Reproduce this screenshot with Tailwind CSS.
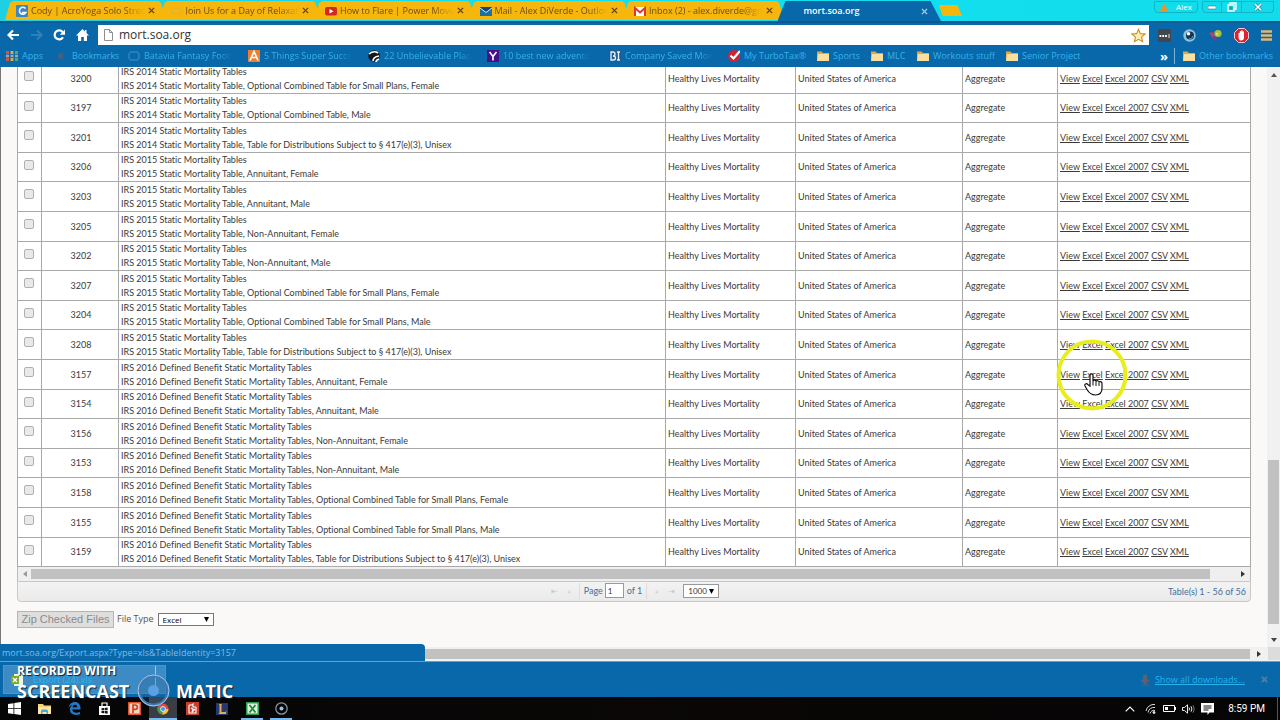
<!DOCTYPE html>
<html lang="en">
<head>
<meta charset="utf-8">
<title>mort.soa.org</title>
<script src="https://cdn.jsdelivr.net/npm/@tailwindcss/browser@4"></script>
</head>
<body class="relative flex h-screen flex-col overflow-hidden bg-[#fbf9f8] font-['Open_Sans',sans-serif]">

<header class="shrink-0 bg-[#0868aa]">
  <div class="flex h-[21px] items-start bg-linear-to-r from-[#1fd0e4] via-[#10e0f0] to-[#12dcec] pt-px pl-[5px]">
    <div id="tabs" class="grid w-[927px] grid-cols-6" role="tablist"></div>
    <button aria-label="New tab" class="mt-1 ml-[7px] h-[11px] w-[23px] bg-[#f6b60c] [clip-path:polygon(0_0,80%_0,100%_100%,16%_100%)]"></button>
    <div class="mr-[6px] ml-auto flex h-3 items-center text-[8px] leading-none text-white">
      <button class="flex h-3 w-11 items-center justify-center gap-2 rounded-b border border-[#12b4c6]"><svg class="size-2" viewBox="0 0 8 8"><path d="M4 0 8 8H0z" fill="#e5952a"/></svg>Alex</button>
      <button aria-label="Minimize" class="ml-1 flex h-3 w-5 items-center justify-center rounded-bl border border-[#12b4c6]"><svg class="size-2" viewBox="0 0 8 8"><rect y="3" width="8" height="3" fill="#fff" stroke="#2a7f92" stroke-width=".6"/></svg></button>
      <button aria-label="Restore" class="flex h-3 w-5 items-center justify-center border border-l-0 border-[#12b4c6]"><svg class="size-[10px]" viewBox="0 0 10 10" fill="none" stroke="#fff" stroke-width="1.4"><path d="M3 2.500V1h6v6H7.500"/><rect x="1" y="3" width="6" height="6"/><rect x="3" y="5" width="2" height="2" stroke="#2a7f92" stroke-width=".8"/></svg></button>
      <button aria-label="Close" class="flex h-3 w-8 items-center justify-center rounded-br border border-l-0 border-[#12b4c6]"><svg class="size-2" viewBox="0 0 8 8"><path d="M1 1l6 6M7 1 1 7" stroke="#2a7f92" stroke-width="2.800"/><path d="M1 1l6 6M7 1 1 7" stroke="#fff" stroke-width="1.600"/></svg></button>
    </div>
  </div>
  <div class="flex h-[26px] items-center border-t-2 border-[#075a94] pl-[7px]">
    <button aria-label="Back"><svg class="h-3 w-[13px]" viewBox="0 0 13 12" fill="none" stroke="#fff" stroke-width="2.200"><path d="M12 6H1.500M6 1.500 1.500 6 6 10.500"/></svg></button>
    <button aria-label="Forward" class="ml-[10px]"><svg class="h-3 w-[13px]" viewBox="0 0 13 12" fill="none" stroke="#2f80b9" stroke-width="2.200"><path d="M1 6h10.500M7 1.500 11.500 6 7 10.500"/></svg></button>
    <button aria-label="Reload" class="ml-[10px]"><svg class="h-3 w-[13px]" viewBox="0 0 13 12"><path d="M10 8.200A4.500 4.500 0 1 1 9.600 3" fill="none" stroke="#fff" stroke-width="2.200"/><path d="M12 .5v5.200H6.800z" fill="#fff"/></svg></button>
    <button aria-label="Home" class="ml-[10px]"><svg class="h-3 w-[13px]" viewBox="0 0 13 12"><path d="M6.500 0 0 6.500h2V12h3.200V8h2.600v4H11V6.500h2L10.500 4V1H9v1.500z" fill="#fff"/></svg></button>
    <div class="ml-[9px] flex h-5 flex-1 items-center bg-white pr-[3px] pl-[6px]">
      <svg class="h-3 w-[9px]" viewBox="0 0 9 12" fill="#fff" stroke="#8e8e8e"><path d="M.5.5h5l3 3v8h-8zM5.500.5v3h3"/></svg>
      <input aria-label="Address" value="mort.soa.org" class="ml-[6px] min-w-0 flex-1 text-[12px] leading-5 text-[#333] outline-none">
      <button aria-label="Bookmark this page"><svg class="size-[15px]" viewBox="0 0 24 24"><path d="m12 2 3 7 7.500.6-5.700 5 1.800 7.400-6.600-4-6.600 4 1.800-7.400-5.700-5L9 9z" fill="#fdf0b0" stroke="#c98f2a" stroke-width="1.700"/></svg></button>
    </div>
    <div class="flex items-center pr-2 pl-[9px]">
      <svg class="h-[13px] w-[13px]" viewBox="0 0 13 13"><rect width="13" height="13" rx="1" fill="#44464d"/><path d="M1.500 7h7.500" stroke="#fff" stroke-width="2" stroke-dasharray="1.800 1"/><path d="M11 5v4" stroke="#ddd"/></svg>
      <svg class="ml-[12px] size-[13px]" viewBox="0 0 13 13"><circle cx="6.500" cy="6.500" r="6.200" fill="#8fc3d8"/><circle cx="7" cy="6.500" r="4" fill="#16324f"/><circle cx="5.500" cy="4.800" r="1.800" fill="#fff"/><path d="M6 10a4 4 0 0 0 4-3" stroke="#48a8d8" fill="none"/></svg>
      <svg class="ml-[13px] size-[13px]" viewBox="0 0 13 13"><circle cx="9" cy="4.500" r="3.600" fill="#a7c43a"/><path d="M0 4l4-1 2 4-2 2z" fill="#b3446e"/><path d="M4 7l4 1-1 4-3-1z" fill="#7d3b8c"/><circle cx="8" cy="5" r="1.500" fill="#e9d65c"/></svg>
      <svg class="ml-[12px] size-[15px]" viewBox="0 0 15 15"><path d="M4.500.5h6l4 4v6l-4 4h-6l-4-4v-6z" fill="#dd2333" stroke="#f2c9cc"/><path d="M4.500 8V5.200a.7.700 0 0 1 1.300 0V3.800a.7.700 0 0 1 1.400 0V3a.7.700 0 0 1 1.400 0v1a.7.700 0 0 1 1.400 0v5.500a3 3 0 0 1-3 3c-2 0-2.500-2-2.500-4.500z" fill="#fff"/></svg>
      <button aria-label="Menu" class="ml-[12px] block"><svg class="h-[11px] w-[11px]" viewBox="0 0 11 11"><path d="M0 1.500h11M0 5.500h11M0 9.500h11" stroke="#e0b673" stroke-width="2.300"/></svg></button>
    </div>
  </div>
  <nav aria-label="Bookmarks" class="flex h-5 items-center pr-[7px] pb-[2px] pl-[6px] text-[9px] leading-[18px] text-[#35b2ea]" id="marks"></nav>
</header>

<div class="flex min-h-0 flex-1">
  <main class="flex min-w-0 flex-1 flex-col justify-end overflow-hidden border-l border-[#777] px-4">
    <table class="w-full shrink-0 table-fixed border-collapse bg-white font-[Lato,'Liberation_Sans',sans-serif] text-[9px] leading-[14px] text-[#3a3a3a] [font-variant-ligatures:none]">
      <colgroup><col class="w-6"><col class="w-[77px]"><col><col class="w-[130px]"><col class="w-[167px]"><col class="w-[95px]"><col class="w-[193px]"></colgroup>
      <tbody id="rows"></tbody>
    </table>
    <div class="flex h-[14px] shrink-0 items-center border-x border-[#bbb] bg-[#efefef]">
      <svg class="ml-1 size-[6px]" viewBox="0 0 6 6"><path d="M5 0v6L1 3z" fill="#999"/></svg>
      <div class="ml-[3px] h-[10px] flex-1 bg-[#c1c1c1]"></div>
      <svg class="mr-1 ml-[30px] size-[6px]" viewBox="0 0 6 6"><path d="M1 0v6l4-3z" fill="#333"/></svg>
    </div>
    <div class="grid h-[21px] shrink-0 grid-cols-[1fr_auto_1fr] items-center rounded-b border border-[#c8c8c8] bg-linear-to-b from-[#f3f3f3] to-[#eaeaea] font-[Lato,sans-serif] text-[10px] leading-4 text-[#42709b]">
      <span></span>
      <div class="flex items-center pb-[2px]">
        <button aria-label="First page" class="w-[11px] text-[8px] text-[#c6c6c6]">⇤</button>
        <button aria-label="Previous page" class="ml-1 w-[11px] text-[8px] text-[#c6c6c6]">«</button>
        <label for="pg" class="ml-1 border-l border-[#ddd] pl-1 text-[9px]">Page</label>
        <input id="pg" value="1" class="ml-[2px] h-[15px] w-[19px] border border-[#8a9db5] bg-white pl-[2px] text-[8px] text-[#333]">
        <span class="ml-[3px] border-r border-[#ddd] pr-1 text-[9px]">of 1</span>
        <button aria-label="Next page" class="ml-1 w-[11px] text-[8px] text-[#c6c6c6]">»</button>
        <button aria-label="Last page" class="ml-1 w-[11px] text-[8px] text-[#c6c6c6]">⇥</button>
        <span class="relative ml-[6px] flex"><select aria-label="Rows per page" class="h-[14px] w-9 appearance-none border border-[#999] bg-white pl-1 text-[8px] leading-3 text-[#333]"><option>1000</option></select><svg class="pointer-events-none absolute top-[5px] right-[5px] size-[5px]" viewBox="0 0 6 6"><path d="M0 0h6L3 6z" fill="#000"/></svg></span>
      </div>
      <span class="pr-1 text-right text-[9px]">Table(s) 1 - 56 of 56</span>
    </div>
    <div class="mt-2 mb-[19px] flex h-[18px] shrink-0 items-center font-['Liberation_Sans',sans-serif] text-[11px] text-[#555]">
      <button disabled class="h-[17px] w-[97px] border border-[#b5b5b5] bg-[#dedede] leading-[15px] text-[#8b8b8b]">Zip Checked Files</button>
      <label for="ft" class="ml-[3px] font-['Open_Sans',sans-serif] text-[9px]">File Type</label>
      <span class="relative ml-1 flex"><select id="ft" class="h-[13px] w-14 appearance-none border border-[#777] bg-white pl-1 font-['Open_Sans',sans-serif] text-[8px] leading-[11px] text-black"><option>Excel</option></select><svg class="pointer-events-none absolute top-1 right-[5px] size-[5px]" viewBox="0 0 6 6"><path d="M0 0h6L3 6z" fill="#000"/></svg></span>
    </div>
  </main>
  <div class="flex w-[13px] shrink-0 flex-col items-center bg-[#f1f1f1] pt-[5px] pb-1">
    <svg class="size-[6px]" viewBox="0 0 6 6"><path d="M0 5h6L3 1z" fill="#555"/></svg>
    <div class="mt-auto mb-[13px] h-[164px] w-[11px] bg-[#c1c1c1]"></div>
    <svg class="size-[6px]" viewBox="0 0 6 6"><path d="M0 1h6L3 5z" fill="#444"/></svg>
  </div>
</div>
<div class="relative flex h-[14px] shrink-0 items-center bg-[#f1f1f1] pb-px">
  <div class="h-[10px] flex-1 bg-[#c1c1c1]"></div>
  <svg class="mx-[6px] size-[6px]" viewBox="0 0 6 6"><path d="M1 0v6l4-3z" fill="#333"/></svg>
  <span class="h-full w-[12px] bg-[#dcdcdc]"></span>
  <div class="absolute bottom-0 left-0 h-[17px] w-[425px] rounded-tr bg-[#0868aa] pl-[2px] text-[9px] leading-[18px] text-[#7ebce6]">mort.soa.org/Export.aspx?Type=xls&amp;TableIdentity=3157</div>
</div>

<section aria-label="Downloads" class="flex h-9 shrink-0 items-center border-t border-[#5ba3d2] bg-[#0868aa] text-[9px]">
  <button class="ml-[3px] flex h-[29px] w-[163px] items-center border border-[#4c96cb] bg-[#3c8bc4] text-[#22b8f2]">
    <svg class="ml-[7px] size-3" viewBox="0 0 12 12"><path d="M3 0h7l2 2v10H3z" fill="#eef3ea"/><rect y="2" width="8" height="8" fill="#7da82b"/><path d="m2 4 4 4M6 4 2 8" stroke="#fff" stroke-width="1.300"/></svg>
    <span class="ml-[10px]">Export (24).xls</span>
    <span class="mr-[9px] ml-auto h-full border-l border-[#9dc8e6]"></span>
  </button>
  <svg class="ml-auto h-3 w-2" viewBox="0 0 8 12"><path d="M2.500 1h3v5H8L4 10 0 6h2.500zM0 11h8" fill="#5b6271" stroke="#5b6271"/></svg>
  <a href="#" class="ml-[6px] text-[#27b4ee] underline">Show all downloads...</a>
  <button aria-label="Close downloads bar" class="mr-3 ml-4"><svg class="size-[7px]" viewBox="0 0 8 8"><path d="M1 1l6 6M7 1 1 7" stroke="#4c82a8" stroke-width="2"/></svg></button>
</section>

<footer class="flex h-[23px] shrink-0 items-center bg-linear-to-r from-[#060606] via-[#0a0706] to-[#060505] text-[10px] text-white">
  <button aria-label="Start" class="flex h-full w-[29px] items-center justify-center"><svg class="size-[13px]" viewBox="0 0 13 13"><path d="M0 2l5.500-.8v5H0zM6.300 1 13 0v6.200H6.300zM0 7h5.500v5L0 11.200zM6.300 7H13v6l-6.700-1z" fill="#fff"/></svg></button>
  <button aria-label="File Explorer" class="flex h-full w-[30px] items-center justify-center"><svg class="h-3 w-[13px]" viewBox="0 0 13 12"><path d="M0 1h5l1 1.500h7V11H0z" fill="#f2d27a"/><path d="M0 4h13v7H0z" fill="#fbe7a2"/><path d="M3 11V8q0-1.500 1.500-1.500h4Q10 6.500 10 8v3H8.500V9h-4v2z" fill="#4aa8dc"/></svg></button>
  <button aria-label="Edge" class="flex h-full w-[30px] items-center justify-center"><svg class="size-[13px]" viewBox="0 0 24 24"><path d="M1 11C2 4 7 0 12.500 0 19 0 23 5 23 11v3H8c0 4 4 6 7.500 6 2.500 0 4.500-.7 6.500-2v4.500c-2 1-4.500 1.500-7 1.500C8 24 3.500 20 3.500 14c0-4 2-7 5-8.500C5 6 2.500 8 1 11zm7.500-1.500H17C17 7 15.500 5 13 5S8.800 7 8.500 9.500z" fill="#2277c9"/></svg></button>
  <button aria-label="Store" class="flex h-full w-[30px] items-center justify-center"><svg class="size-[13px]" viewBox="0 0 13 13"><path d="M1 4h11v9H1z" fill="#fff"/><path d="M4 4V1h5v3" fill="none" stroke="#fff" stroke-width="1.200"/><path d="M3.500 6.300 6 6v2.300H3.500zM6.600 5.900 9.600 5.500v2.800h-3zM3.500 8.900H6v2.300l-2.500-.3zM6.600 8.900h3v2.800l-3-.4z" fill="#111"/></svg></button>
  <button aria-label="PowerPoint" class="flex h-full w-[30px] items-center justify-center"><svg class="size-[13px]" viewBox="0 0 13 13"><rect width="13" height="13" fill="#d9532c"/><rect x="1.500" y="1.500" width="10" height="10" fill="#f4d6c8"/><path d="M5 11V3h2.200a2.200 2.200 0 0 1 0 4.400H5" fill="none" stroke="#d0421b" stroke-width="1.700"/></svg></button>
  <button aria-label="Chrome" class="flex h-full w-7 items-center justify-center border-b-2 border-[#76b9ed] bg-[#3a3e44] pt-[2px]"><svg class="size-3" viewBox="0 0 24 24"><circle cx="12" cy="12" r="11" fill="#e2453a"/><path d="M12 12 2 7a11 11 0 0 0 9 16z" fill="#3ba153"/><path d="M12 12h11a11 11 0 0 1-12 11z" fill="#f4c52e"/><circle cx="12" cy="12" r="5" fill="#4a8ff0" stroke="#fff" stroke-width="1.500"/></svg></button>
  <button aria-label="Reader" class="flex h-full w-[30px] items-center justify-center"><svg class="size-[13px]" viewBox="0 0 13 13"><rect width="13" height="13" fill="#c5402c"/><path d="M3 3h3l1-1v3h3M3 3v8h7V5M5 6l2 1-1 3 3-3" fill="none" stroke="#fff" stroke-width="1.100"/></svg></button>
  <button aria-label="League" class="flex h-full w-[30px] items-center justify-center"><svg class="size-3" viewBox="0 0 12 12"><rect width="12" height="12" fill="#26386f"/><path d="M2.500 1h3.500L5.500 2v7h4l1-1.500L10 11H2.500l1-1.500V2z" fill="#dcae4e"/></svg></button>
  <button aria-label="Excel" class="mx-1 flex h-full w-[22px] items-center justify-center border-b-2 border-[#76b9ed] pt-[2px]"><svg class="size-[13px]" viewBox="0 0 13 13"><rect width="13" height="13" fill="#2c9a4b"/><rect x="1.500" y="1.500" width="10" height="10" fill="#dff0df"/><path d="m3.500 3 6 7.500M9.500 3l-6 7.500" stroke="#1f8a3c" stroke-width="1.800"/></svg></button>
  <button aria-label="Screencast recorder" class="ml-[3px] flex h-full w-[22px] items-center justify-center border-b-2 border-[#76b9ed] pt-[2px]"><svg class="size-[13px]" viewBox="0 0 13 13"><circle cx="6.500" cy="6.500" r="5.700" fill="none" stroke="#8d9aa6" stroke-width="1.200"/><circle cx="6.500" cy="6.500" r="2" fill="#8fc4ee"/></svg></button>
  <div class="mr-[2px] ml-auto flex h-full items-center border-r border-[#555] pr-3">
    <svg class="h-[6px] w-[10px]" viewBox="0 0 10 6"><path d="m.7 5.300 4.300-4.300 4.300 4.300" fill="none" stroke="#fff" stroke-width="1.200"/></svg>
    <svg class="ml-[10px] h-[11px] w-[11px]" viewBox="0 0 11 11" fill="none" stroke="#ddd"><path d="M1 8a8 8 0 0 1 9-6.500M3 9.500a6 6 0 0 1 7-5M5 10.500a4 4 0 0 1 5-3"/><circle cx="9" cy="9.500" r="1" fill="#fff"/></svg>
    <svg class="ml-[7px] h-[7px] w-[13px]" viewBox="0 0 13 7"><path d="M.5.500h11v6H.5zM12.500 2v3" fill="none" stroke="#fff"/><path d="M2 2h3v3H2z" fill="#fff"/></svg>
    <svg class="ml-[6px] h-[10px] w-[13px]" viewBox="0 0 13 10" fill="none" stroke="#eee"><path d="M.5 3.500H2.500L5.500.8v8.400L2.500 6.500h-2z"/><path d="M7 3.500q1 1.500 0 3M9 2.300q1.800 2.700 0 5.400"/><path d="M11 1.300q2.500 3.700 0 7.400" stroke="#777"/></svg>
    <svg class="ml-[6px] h-3 w-[13px]" viewBox="0 0 13 12"><path d="M0 0h13v9.500H8.500L6.500 12v-2.500H0z" fill="#fff"/><path d="M2.500 3h8M2.500 5h8M2.500 7h5" stroke="#111"/></svg>
    <span class="ml-[14px] font-[Roboto,sans-serif]">8:59 PM</span>
  </div>
</footer>

<!-- Recorder watermark -->
<div class="pointer-events-none absolute bottom-[13px] left-[17px] font-['Open_Sans',sans-serif] leading-none font-bold text-white [text-shadow:1px_1px_1px_#123]">
  <div class="-mb-[3px] text-[12px]">RECORDED WITH</div>
  <div class="flex items-center text-[18px]"><span class="w-[120px]">SCREENCAST</span>
    <svg class="size-[33px]" viewBox="0 0 33 33"><circle cx="16.500" cy="16.500" r="14.500" fill="#2d5f90" fill-opacity=".3" stroke="#3d79b6" stroke-width="3"/><circle cx="16.500" cy="16.500" r="15.500" fill="none" stroke="#a9c9ea"/><circle cx="16.500" cy="16.500" r="5.500" fill="#58a1e4"/></svg>
    <span class="ml-[6px]">MATIC</span></div>
</div>

<!-- Pointer with click highlight -->
<svg class="pointer-events-none absolute top-[338px] left-[1055px] size-[74px]" viewBox="0 0 74 74">
  <circle cx="37" cy="37" r="33.500" fill="none" stroke="#e8ee1c" stroke-width="4"/>
  <path d="M35 48V37.500c0-2.200 3-2.200 3 0V43c.5-1.500 3-1.200 3 .5.500-1.300 3-1 3 .7.500-1 3-.8 3 1.300V50c0 4-2 7-6.500 7S34 55 32 51.500l-2-3.500c-1-2 1.500-3 2.800-1.500z" fill="#fff" stroke="#111" stroke-width="1.200"/>
  <path d="M38 43v4.500M41 43.500V48M44 44.500V48" stroke="#111" stroke-width="1"/>
</svg>

<script>
const tabs = [
  ['Cody | AcroYoga Solo Stretch', '<rect width="12" height="12" rx="1" fill="#3d86c6"/><path d="M9.500 3.500a3.500 3.500 0 1 0 .5 4H6" fill="none" stroke="#fff" stroke-width="1.500"/>'],
  ['Join Us for a Day of Relaxation', '<ellipse cx="6" cy="6" rx="5" ry="3" fill="none" stroke="#e9b02a" stroke-width="1.500"/>'],
  ['How to Flare | Power Moves', '<rect y="2" width="12" height="8.500" rx="2" fill="#d3281e"/><path d="M4.500 4v4.500L8.500 6.200z" fill="#fff"/>'],
  ['Mail - Alex DiVerde - Outlook', '<path d="M0 2h12v9H0z" fill="#1a6fa5"/><path d="M0 2l6 5 6-5z" fill="#0d4a78"/><path d="M0 3l6 4.500L12 3" fill="none" stroke="#cfe6f0"/>'],
  ['Inbox (2) - alex.diverde@gmail', '<path d="M0 2h12v9H0z" fill="#fff"/><path d="M1 11V3l5 4.500L11 3v8" fill="none" stroke="#d93a2e" stroke-width="2"/>'],
];
const closeIcon = c => `<svg class="size-[7px]" viewBox="0 0 8 8"><path d="M1 1l6 6M7 1 1 7" stroke="${c}" stroke-width="1.500"/></svg>`;
document.getElementById('tabs').innerHTML = tabs.map(([t, i]) => `
  <div role="tab" class="-mr-[7px] flex h-[19px] items-center bg-[#f6b60c] pr-[12px] pl-[11px] text-[9px] [clip-path:polygon(5px_10%,8px_0,154px_0,156px_10%,100%_100%,0_100%)]">
    <svg class="size-3 shrink-0" viewBox="0 0 12 12">${i}</svg>
    <span class="ml-[3px] w-[113px] overflow-hidden whitespace-nowrap text-[#6d4d0c] [mask-image:linear-gradient(to_right,#000_82%,transparent)]">${t}</span>
    <button aria-label="Close tab" class="ml-auto">${closeIcon('#5f430d')}</button>
  </div>`).join('') + `
  <div role="tab" aria-selected="true" class="relative -mr-[9px] flex h-5 items-center bg-[#0868aa] pr-[13px] pl-[26px] text-[9px] font-semibold text-white [clip-path:polygon(8px_0,153px_0,100%_100%,0_100%)]">
    <span>mort.soa.org</span>
    <button aria-label="Close tab" class="ml-auto">${closeIcon('#a8d0ec')}</button>
  </div>`;

const folder = '<path d="M0 1.500h4.500L6 3h6v8H0z" fill="#d9a84f"/><path d="M1 4h11v7H0z" fill="#fbdf9d"/>';
const marks = [
  ['Apps', 'w-[50px]', '<g fill="#d2573d"><path d="M0 1h3v3H0zM0 8h3v3H0z"/></g><g fill="#c3b24d"><path d="M4.500 1h3v3h-3zM4.500 8h3v3h-3z"/></g><g fill="#55a66f"><path d="M9 1h3v3H9zM9 8h3v3H9z"/></g><path d="M0 4.700h3v2.600H0zM4.500 4.700h3v2.600h-3zM9 4.700h3v2.600H9z" fill="#a9a1b0"/>'],
  ['Bookmarks', 'w-[72px]', '<circle cx="4.500" cy="6" r="3" fill="#44607f"/>'],
  ['Batavia Fantasy Football', 'w-[120px]', '<rect x="1" y="2" width="10" height="8" rx="3" fill="none" stroke="#2f83ba" stroke-width="1.500"/>'],
  ['5 Things Super Successful', 'w-[120px]', '<rect width="12" height="12" fill="#ef7f2f"/><path d="M2 10.500 6 1.500l4 9M3.800 7.500h4.400" fill="none" stroke="#fff" stroke-width="1.700"/>'],
  ['22 Unbelievable Places', 'w-[119px]', '<circle cx="6" cy="6" r="5.800" fill="#15181c"/><path d="M1 4q5-4 9-1M5 11q0-4 6-5M8 12q0-2 3-3" fill="none" stroke="#fff" stroke-width="1.600"/>'],
  ['10 best new adventures', 'w-[122px]', '<rect width="12" height="12" fill="#45108a"/><path d="m2.500 2 3.500 4.500L9.500 2M6 6v4.500" fill="none" stroke="#fff" stroke-width="1.600"/>'],
  ['Company Saved Money', 'w-[119px]', '<rect width="12" height="12" fill="#1d5f92"/><path d="M2 2v8h2.500q2 0 2-2T4 6q2 0 2-2T4 2zM9.500 2v8M8 2h3M8 10h3" fill="none" stroke="#e8eef4" stroke-width="1.300"/>'],
  ['My TurboTax®', 'w-[89px]', '<circle cx="6" cy="6" r="6" fill="#cf2535"/><path d="m2.500 5.500 3 3L12 1" fill="none" stroke="#fff" stroke-width="2.200"/>'],
  ['Sports', 'w-[54px]', folder], ['MLC', 'w-[46px]', folder], ['Workouts stuff', 'w-[89px]', folder], ['Senior Project', 'w-[80px]', folder],
];
const mark = ([t, w, i]) => `<a href="#" class="flex shrink-0 items-center ${w}"><svg class="size-3 shrink-0" viewBox="0 0 12 12">${i}</svg><span class="ml-1 max-w-[88px] overflow-hidden whitespace-nowrap ${t.length > 20 || t.startsWith('Company') ? '[mask-image:linear-gradient(to_right,#000_85%,transparent)]' : ''}">${t}</span></a>`;
document.getElementById('marks').innerHTML = marks.map(mark).join('') +
  '<button aria-label="More bookmarks" class="ml-auto pr-[6px] text-[13px] font-bold text-white">»</button><span class="mr-2 h-4 border-l border-[#7ab4dc]"></span>' +
  mark(['Other bookmarks', 'w-auto', folder]);

const s14 = 'IRS 2014 Static Mortality Table', s15 = 'IRS 2015 Static Mortality Table', s16 = 'IRS 2016 Defined Benefit Static Mortality Tables';
const small = 'Optional Combined Table for Small Plans', dist = 'Table for Distributions Subject to § 417(e)(3), Unisex';
const rows = [
  [3200, s14, small + ', Female'], [3197, s14, 'Optional Combined Table, Male'], [3201, s14, dist],
  [3206, s15, 'Annuitant, Female'], [3203, s15, 'Annuitant, Male'], [3205, s15, 'Non-Annuitant, Female'], [3202, s15, 'Non-Annuitant, Male'],
  [3207, s15, small + ', Female'], [3204, s15, small + ', Male'], [3208, s15, dist],
  [3157, s16, 'Annuitant, Female'], [3154, s16, 'Annuitant, Male'], [3156, s16, 'Non-Annuitant, Female'], [3153, s16, 'Non-Annuitant, Male'],
  [3158, s16, small + ', Female'], [3155, s16, small + ', Male'], [3159, s16, dist],
];
document.getElementById('rows').innerHTML = rows.map(([id, s, d], n) => `
  <tr class="${n % 5 == 1 || n % 5 == 3 ? 'h-[29px]' : 'h-[30px]'} *:border *:border-[#a9a9a9] *:p-0 *:pl-[2px]">
    <td><input type="checkbox" aria-label="Select table ${id}" class="mb-[5px] ml-1 block size-[10px] appearance-none rounded-xs border border-[#b0b0b0] bg-[#e9e9e9]"></td>
    <td class="text-center">${id}</td>
    <td class="whitespace-nowrap">${s.replace(/Tables?$/, 'Tables')}<br>${s}, ${d}</td>
    <td>Healthy Lives Mortality</td><td>United States of America</td><td>Aggregate</td>
    <td>${['View', 'Excel', 'Excel 2007', 'CSV', 'XML'].map(l => `<a href="#" class="underline">${l}</a>`).join(' ')}</td>
  </tr>`).join('');
</script>
</body>
</html>
